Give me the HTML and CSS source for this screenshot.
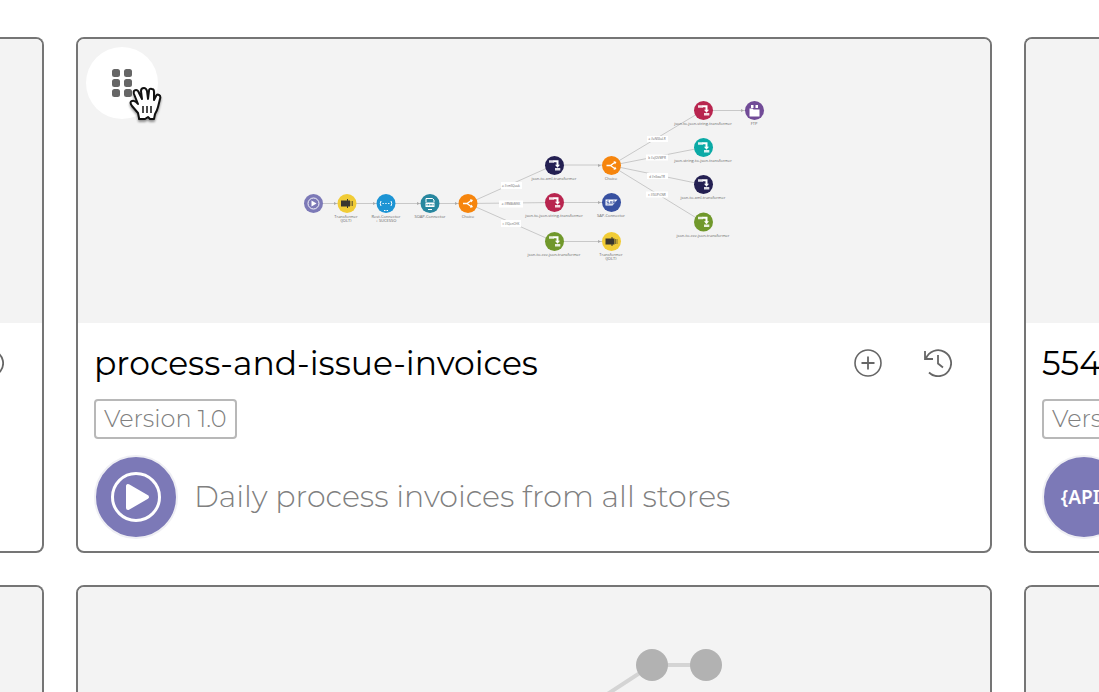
FILE: index.html
```html
<!DOCTYPE html>
<html lang="en">
<head>
<meta charset="utf-8">
<meta name="viewport" content="width=device-width, initial-scale=1">
<title>Pipelines</title>
<link rel="stylesheet" href="styles.css">
</head>
<body>
<svg class="defs" width="0" height="0" aria-hidden="true">
  <defs>
    <symbol id="history" viewBox="0 0 28 28">
      <path d="M2 9.500A13 13 0 1 1 5 23.500M1 2v8h8M14 6v8.500l5 4" fill="none" stroke="currentColor" stroke-width="1.800"/>
    </symbol>
    <g id="convert" fill="none" stroke="#fff">
      <path d="M-5.500-4H-.5" stroke-width="2.400" opacity=".85"/>
      <path d="M-1-4.200H3V0" stroke-width="2"/>
      <path d="M.5-.8H5.500L3 2.200z" fill="#fff" stroke="none"/>
      <path d="M.5 3.800H5.800" stroke-width="2.600" opacity=".85"/>
    </g>
    <g id="choice" fill="none" stroke="#fff" stroke-width="1.300">
      <path d="M-5 0H-1L3.500-3.200M-1 0L3.500 3.200"/>
      <path d="M2-4.500L5-3.500L3.500-1M2 4.500L5 3.500L3.500 1" fill="#fff" stroke="none"/>
    </g>
    <g id="jolt" fill="#38362f">
      <path d="M-6-3H0V-4.500H1V-3H3V3H1V4.500H0V3H-6z"/>
      <path d="M3.500-2.500H4.500V2.500H3.500zM5-2.500H6V2.500H5z" opacity=".6"/>
    </g>
  </defs>
</svg>
<main class="board">
  <article class="card card-before">
    <div class="preview"></div>
    <div class="body">
      <div class="heading">
        <button class="icon-button" type="button" aria-label="History"><svg viewBox="0 0 28 28"><use href="#history"/></svg></button>
      </div>
    </div>
  </article>

  <article class="card">
    <div class="preview">
      <svg class="diagram" viewBox="78 39 912 284" aria-label="Flow diagram">
        <g class="edges">
          <path d="M313 203.500H468M468 203.500L554 165H611M468 203.500L554 202.500H611M468 203.500L554 241.500H611M611 165.500L703 110.500H754M611 165.500L703 147.500M611 165.500L703 184.500M611 165.500L703 222"/>
        </g>
        <g class="arrows">
          <path d="M334 202l3 1.500-3 1.500zM373 202l3 1.500-3 1.500zM417 202l3 1.500-3 1.500zM455 202l3 1.500-3 1.500zM598 164l3 1.500-3 1.500zM598 201l3 1.500-3 1.500zM598 240l3 1.500-3 1.500zM741 109l3 1.500-3 1.500z"/>
        </g>
        <g class="tag-boxes">
          <path d="M501 182h21v7h-21zM499 200.500h24v7h-24zM501 220h20v7h-20zM647 136h21v6h-21zM646 154.500h22v6h-22zM647 173h21v6h-21zM646 191.500h22v6h-22z"/>
        </g>
        <g class="tags">
          <text x="511" y="187">a #cmSQuuk</text>
          <text x="511" y="205">a #RNBkMKK</text>
          <text x="511" y="225">c #lQonCHK</text>
          <text x="657" y="140">a #uNSSuLR</text>
          <text x="657" y="159">b #aJOVMPR</text>
          <text x="657" y="178">d #nSwaTR</text>
          <text x="657" y="196">c #ISUPiCNR</text>
        </g>
        <g>
          <circle cx="313.500" cy="203.500" r="9.500" fill="#7c79b7"/>
          <circle cx="347" cy="203.500" r="9.500" fill="#f1cc36"/>
          <circle cx="386" cy="203.500" r="9.500" fill="#1c94d4"/>
          <circle cx="430" cy="203.500" r="9.500" fill="#28879f"/>
          <circle cx="468" cy="203.500" r="9.500" fill="#f6850d"/>
          <circle cx="554.500" cy="165.500" r="9.500" fill="#242052"/>
          <circle cx="554.500" cy="202.500" r="9.500" fill="#b8254f"/>
          <circle cx="554.500" cy="241.500" r="9.500" fill="#70982b"/>
          <circle cx="611.500" cy="165.500" r="9.500" fill="#f6850d"/>
          <circle cx="611.500" cy="202.500" r="9.500" fill="#3750a0"/>
          <circle cx="611.500" cy="241.500" r="9.500" fill="#f1cc36"/>
          <circle cx="703.500" cy="110.500" r="9.500" fill="#b8254f"/>
          <circle cx="703.500" cy="147.500" r="9.500" fill="#0baaa6"/>
          <circle cx="703.500" cy="184.500" r="9.500" fill="#242052"/>
          <circle cx="703.500" cy="222" r="9.500" fill="#70982b"/>
          <circle cx="754.500" cy="110.500" r="9.500" fill="#714b97"/>
        </g>
        <circle cx="313.500" cy="203.500" r="5.500" fill="none" stroke="#fff" stroke-width=".9"/>
        <path d="M311.500 200.500l5 3-5 3z" fill="#fff"/>
        <use href="#jolt" x="347" y="203.500"/>
        <use href="#jolt" x="611.500" y="241.500"/>
        <path d="M381 201q-1.500 2.500 0 5M391 201q1.500 2.500 0 5" fill="none" stroke="#fff"/>
        <path d="M382.500 203.500h1.300m1.500 0h1.300m1.500 0h1.300M384 210.500h1.500m1 0h1.500" stroke="#fff" stroke-width="1.200"/>
        <path d="M426 202v-3.500h6.500l1.500 1.500v2" fill="none" stroke="#fff"/>
        <path d="M425.500 202.500h9v4.500h-9zM428 209h4v1h-4z" fill="#fff"/>
        <path d="M426.500 204.800h7" stroke="#28879f" stroke-width="1.600" stroke-dasharray="1 .6"/>
        <use href="#choice" x="468" y="203.500"/>
        <use href="#choice" x="611.500" y="165.500"/>
        <use href="#convert" x="554.500" y="165.500"/>
        <use href="#convert" x="554.500" y="202.500"/>
        <use href="#convert" x="554.500" y="241.500"/>
        <use href="#convert" x="703.500" y="110.500"/>
        <use href="#convert" x="703.500" y="147.500"/>
        <use href="#convert" x="703.500" y="184.500"/>
        <use href="#convert" x="703.500" y="222"/>
        <path d="M605.500 199.500h12l-5 6h-7z" fill="#fff"/>
        <path d="M609 201h-2v1.500h2v1.500h-2.500M610 204.500l1-3.500 1 3.500M613 204v-3h2v1.500h-2" fill="none" stroke="#3750a0" stroke-width=".7"/>
        <path d="M749.500 108.500h3l1 1h6v7h-10zM751 105h2.500v3h-2.500zM755.500 105h2.500v3h-2.500z" fill="#fff"/>
        <g class="names">
          <text x="346" y="218">Transformer</text><text x="346" y="222">(JOLT)</text>
          <text x="386" y="218">Rest-Connector</text><text x="386" y="222">+ SUCESSO</text>
          <text x="430" y="218">SOAP-Connector</text>
          <text x="468" y="218">Choice</text>
          <text x="554" y="180">json-to-xml-transformer</text>
          <text x="554" y="217">json-to-json-string-transformer</text>
          <text x="554" y="256">json-to-csv-json-transformer</text>
          <text x="611" y="180">Choice</text>
          <text x="611" y="217">SAP-Connector</text>
          <text x="611" y="256">Transformer</text><text x="611" y="260">(JOLT)</text>
          <text x="703" y="125">json-to-json-string-transformer</text>
          <text x="703" y="162">json-string-to-json-transformer</text>
          <text x="703" y="199">json-to-xml-transformer</text>
          <text x="703" y="237">json-to-csv-json-transformer</text>
          <text x="754" y="125">FTP</text>
        </g>
      </svg>
      <button class="drag-handle" type="button" aria-label="Move card">
        <svg viewBox="0 0 22 30" width="22" height="30" fill="#666">
          <rect x="1" y="1" width="8" height="8" rx="2.500"/><rect x="13" y="1" width="8" height="8" rx="2.500"/>
          <rect x="1" y="11" width="8" height="8" rx="2.500"/><rect x="13" y="11" width="8" height="8" rx="2.500"/>
          <rect x="1" y="21" width="8" height="8" rx="2.500"/><rect x="13" y="21" width="8" height="8" rx="2.500"/>
        </svg>
      </button>
      <svg class="hand" viewBox="0 0 34 36" aria-hidden="true">
        <path d="M10 32L9 27L3 20Q0 16 3 15Q6 14 9 18L5 8Q4 4 7 4Q9 4 10 7L13 13L12 5Q12 2 15 2Q17 2 18 5L19 13L20 5Q20 2 23 3Q25 3 25 6L25 14L27 10Q28 8 30 9Q32 10 31 13L29 21Q28 25 26 28L25 33H21L19 31L16 33H10Z" fill="#fff" stroke="#111" stroke-width="2" stroke-linejoin="round"/>
        <path d="M14 20v7M18 20v7M22 20v7" stroke="#111" stroke-width="1.500"/>
      </svg>
    </div>
    <div class="body">
      <div class="heading">
        <h2 class="title">process-and-issue-invoices</h2>
        <button class="icon-button" type="button" aria-label="Add"><svg viewBox="0 0 28 28"><path d="M14 7.500v13M7.500 14h13" stroke="currentColor" stroke-width="1.800"/><circle cx="14" cy="14" r="13" fill="none" stroke="currentColor" stroke-width="1.600"/></svg></button>
        <button class="icon-button" type="button" aria-label="History"><svg viewBox="0 0 28 28"><use href="#history"/></svg></button>
      </div>
      <span class="version">Version 1.0</span>
      <div class="summary">
        <span class="trigger">
          <svg viewBox="0 0 80 80" width="80" height="80" aria-hidden="true"><circle cx="40" cy="40" r="23.500" fill="none" stroke="#fff" stroke-width="3"/><path d="M32 29v22l19-11z" fill="#fff" stroke="#fff" stroke-width="4" stroke-linejoin="round"/></svg>
        </span>
        <p class="description">Daily process invoices from all stores</p>
      </div>
    </div>
  </article>

  <article class="card card-after">
    <div class="preview"></div>
    <div class="body">
      <div class="heading"><h2 class="title">554</h2></div>
      <span class="version">Version 1.0</span>
      <div class="summary"><span class="trigger">{API}</span></div>
    </div>
  </article>

  <article class="card card-before"><div class="preview"></div><div class="body"></div></article>
  <article class="card">
    <div class="preview">
      <svg class="diagram" viewBox="78 587 912 284" aria-label="Flow diagram">
        <path d="M706 665H652L560 725" fill="none" stroke="#d4d4d4" stroke-width="4"/>
        <circle cx="652" cy="665" r="16" fill="#b2b2b2"/><circle cx="706" cy="665" r="16" fill="#b2b2b2"/>
      </svg>
    </div>
    <div class="body"></div>
  </article>
  <article class="card card-after"><div class="preview"></div><div class="body"></div></article>
</main>
</body>
</html>
```
FILE: styles.css
```css
* { box-sizing: border-box; }
html { height: 100%; overflow: hidden; }
body {
  height: 100%;
  margin: 0;
  overflow: hidden;
  background: #fff;
  color: #000;
  font-family: Montserrat, Inter, "Open Sans", sans-serif;
}
.defs { position: absolute; }
.board {
  display: grid;
  grid-template-columns: 44px minmax(0, 1fr) 75px;
  gap: 32px;
  padding-top: 37px;
}
.card {
  min-width: 0;
  overflow: hidden;
  border: 2px solid #757575;
  border-radius: 8px;
  background: #fff;
}
.card-before { border-left: 0; border-top-left-radius: 0; border-bottom-left-radius: 0; }
.card-after { border-right: 0; border-top-right-radius: 0; border-bottom-right-radius: 0; }
.preview { position: relative; height: 284px; background: #f3f3f3; }
.diagram { display: block; width: 100%; height: 100%; }
.edges { fill: none; stroke: #c8c8c8; stroke-width: 1; }
.arrows { fill: #aaa; }
.tag-boxes { fill: #fff; }
.tags, .names { fill: #666; font-family: "Open Sans", sans-serif; text-anchor: middle; }
.tags { font-size: 3px; }
.names { font-size: 4px; }
.drag-handle {
  position: absolute;
  top: 8px;
  left: 8px;
  display: grid;
  place-items: center;
  width: 72px;
  height: 72px;
  padding: 0;
  border: 0;
  border-radius: 50%;
  background: #fff;
  cursor: grab;
}
.hand {
  position: absolute;
  top: 47px;
  left: 51px;
  width: 34px;
  height: 36px;
  filter: drop-shadow(0 2px 1px #0006);
  pointer-events: none;
}
.body {
  display: flex;
  flex-direction: column;
  align-items: flex-start;
  padding: 16px 16px 12px;
}
.heading {
  display: flex;
  align-items: center;
  justify-content: flex-end;
  gap: 42px;
  width: 100%;
  height: 48px;
  padding-right: 22px;
}
.card-before .body { padding-left: 0; }
.card-after .heading { justify-content: flex-start; padding-right: 0; }
.title {
  flex: 1;
  margin: 0;
  font-size: 33px;
  font-weight: 400;
  line-height: 44px;
  white-space: nowrap;
}
.icon-button {
  flex: none;
  width: 28px;
  height: 28px;
  padding: 0;
  border: 0;
  background: none;
  color: #666;
}
.icon-button svg { display: block; width: 28px; height: 28px; overflow: visible; }
.version {
  margin-top: 12px;
  padding: 0 8px;
  border: 2px solid #b8b8b8;
  border-radius: 4px;
  color: #808080;
  font-size: 24px;
  font-weight: 300;
  line-height: 36px;
  white-space: nowrap;
}
.summary { display: flex; align-items: center; gap: 16px; margin-top: 16px; }
.trigger {
  display: grid;
  flex: none;
  place-items: center;
  width: 84px;
  height: 84px;
  border: 2px solid #efeff4;
  border-radius: 50%;
  background: #7c79b7;
  color: #fff;
  font-family: "Noto Sans", sans-serif;
  font-size: 19px;
  font-weight: 600;
}
.description {
  margin: 0;
  color: #808080;
  font-size: 30px;
  font-weight: 300;
  line-height: 40px;
}
```
